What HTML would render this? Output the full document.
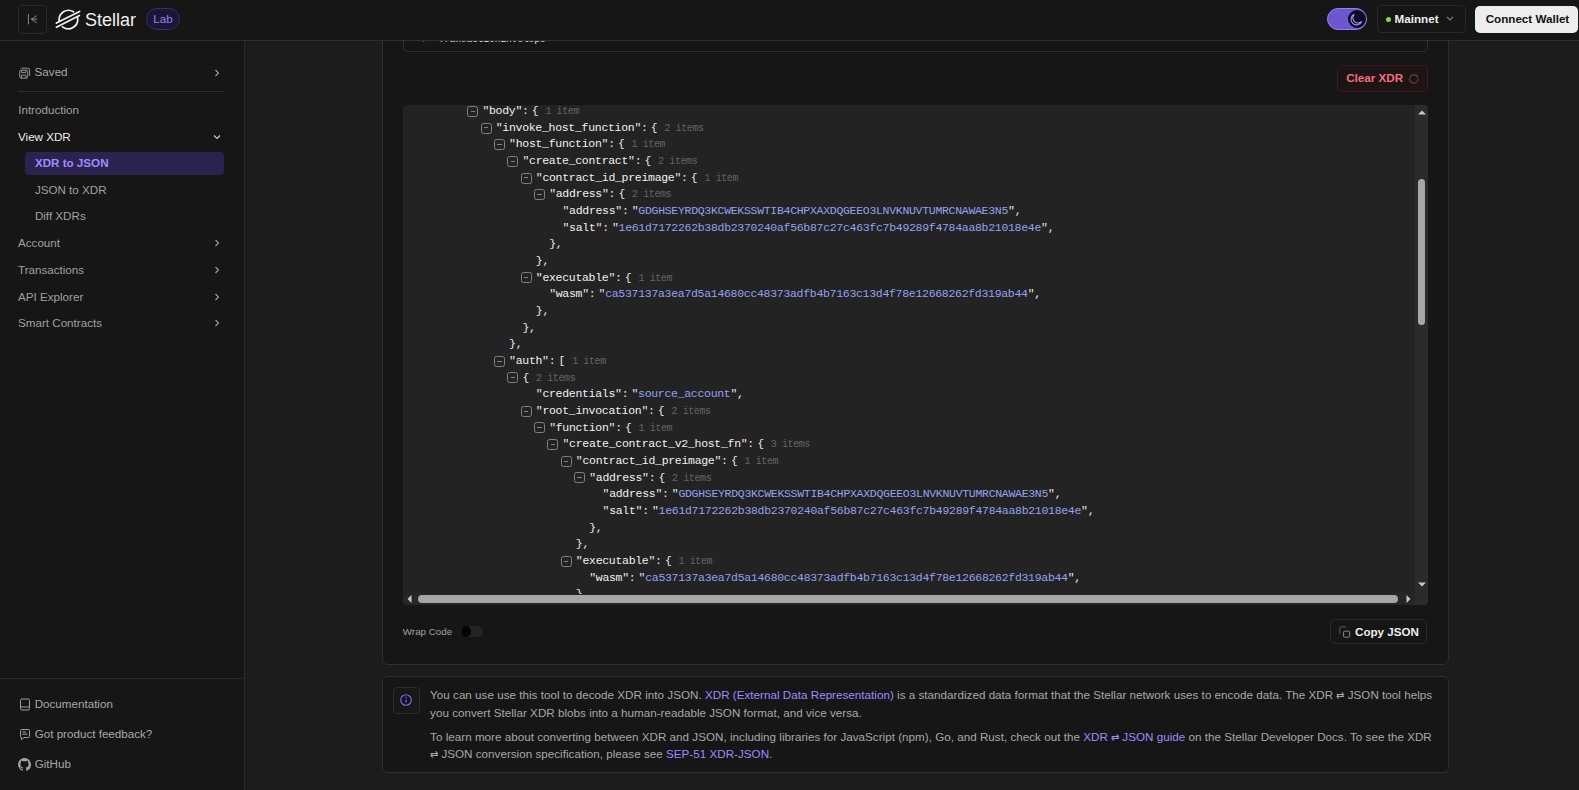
<!DOCTYPE html>
<html><head><meta charset="utf-8">
<style>
*{box-sizing:border-box;margin:0;padding:0}
html,body{width:1579px;height:790px;overflow:hidden;background:#1c1c1c;font-family:"Liberation Sans",sans-serif;color:#ededed}
.abs{position:absolute}
#hdr{position:absolute;left:0;top:0;width:1579px;height:41px;background:#161616;border-bottom:1px solid #2e2e2e;z-index:5}
#side{position:absolute;left:0;top:41px;width:245px;height:749px;background:#161616;border-right:1px solid #2a2a2a}
.nav{position:absolute;font-size:11.63px;line-height:14px;white-space:nowrap}
.chev{position:absolute}
.card{position:absolute;background:#161616;border:1px solid #2e2e2e;border-radius:6px}
#viewer{position:absolute;left:403px;top:104.6px;width:1025.3px;height:500.6px;background:#232323;border-radius:4px;overflow:hidden}
.ln{position:absolute;font-family:"Liberation Mono",monospace;font-size:11.5px;letter-spacing:-0.3px;line-height:16.66px;height:16.66px;white-space:pre;color:#e8e8e8}
.ln .ic{position:absolute;left:-15.2px;top:2.8px;width:11px;height:11px;border:1.3px solid #808080;border-radius:2.5px}
.ln .ic:after{content:"";position:absolute;left:2.4px;top:3.9px;width:4.4px;height:1px;background:#808080}
.ln .q{color:#ededed}
.ln .k{color:#f2f2f2}
.ln .c{color:#e8e8e8;margin-right:3.2px}
.ln .s{color:#e8e8e8}
.ln .v{color:#94a1f2}
.ln .b{color:#e8e8e8}
.ln .n{font-size:10px;letter-spacing:-0.4px;color:#646464;margin-left:7px}
.btn{position:absolute;border-radius:5px;font-weight:bold;font-size:11.63px;white-space:nowrap}
.info{font-size:11.63px;line-height:16.66px;color:#a8a8a8;white-space:nowrap;letter-spacing:0.025px}
.arr{font-size:9.5px}
.info a{color:#9e8cfc;text-decoration:none}
</style></head><body>

<div id="hdr">
  <div class="abs" style="left:18px;top:5px;width:28.5px;height:28.5px;border:1px solid #2a2a2a;border-radius:4px"></div>
  <svg class="abs" style="left:26px;top:13px" width="14" height="13" viewBox="0 0 14 13"><path d="M2.4 1v10.4M11.2 6.2H5.2M10.8 2.6L5.4 6.2 10.8 9.8" stroke="#8a8a8a" stroke-width="1" fill="none"/></svg>
  <svg class="abs" style="left:55px;top:8px" width="26" height="23" viewBox="0 0 26 23"><g fill="none" stroke="#f2f2f2" stroke-width="1.7" stroke-linecap="round"><path d="M4.2 12.8A9.4 9.4 0 0 1 18.5 3.8"/><path d="M22.4 9.2A9.4 9.4 0 0 1 7.5 18.8"/><path d="M1.4 15L24.6 3.4"/><path d="M1.4 19.2L24.4 7.6"/></g></svg>
  <div class="abs" style="left:85px;top:10px;font-size:18px;line-height:20px;color:#f0f0f0">Stellar</div>
  <div class="abs" style="left:146px;top:8px;width:34px;height:22px;border-radius:11px;background:#1b1637;border:1px solid #37305a;font-size:11.6px;line-height:20px;text-align:center;color:#9584e0">Lab</div>

  <div class="abs" style="left:1327px;top:8.2px;width:40px;height:21.6px;border-radius:11px;background:#6e56cf;border:1.3px solid #9484e6"></div>
  <div class="abs" style="left:1348.4px;top:10.3px;width:17.4px;height:17.4px;border-radius:9px;background:#0c0a26"></div>
  <svg class="abs" style="left:1349px;top:11px" width="16" height="16" viewBox="0 0 16 16"><path d="M5.3 3.2A5.6 5.6 0 1 0 12.8 10.4 5 5 0 0 1 5.3 3.2Z" fill="none" stroke="#a99cf0" stroke-width="1.1"/></svg>

  <div class="abs" style="left:1377.4px;top:4.9px;width:88.2px;height:28px;border:1px solid #282828;border-radius:4.5px"></div>
  <div class="abs" style="left:1386.4px;top:16.9px;width:5px;height:5px;border-radius:3px;background:#8fd14f"></div>
  <div class="abs" style="left:1394.6px;top:12px;font-size:11.63px;line-height:14px;font-weight:bold;color:#ededed">Mainnet</div>
  <svg class="abs" style="left:1445px;top:15.2px" width="10" height="7" viewBox="0 0 10 7"><path d="M2 2l3 3 3-3" stroke="#7a7a7a" stroke-width="1.1" fill="none"/></svg>

  <div class="btn" style="left:1475px;top:5.7px;width:102.8px;height:27.1px;background:#ededed;color:#111;line-height:25.4px;padding-left:10.7px">Connect Wallet</div>
</div>

<div id="side">

  <svg class="abs" style="left:18px;top:25px" width="14" height="14" viewBox="0 0 14 14"><g fill="none" stroke="#9a9a9a" stroke-width="0.95"><rect x="1.7" y="4.2" width="8" height="8" rx="1.4"/><path d="M3.6 4.2v2.4h4.2V4.2M3.5 12.2V9.2h4.4v3"/><path d="M3.4 2.2h6.2a2 2 0 0 1 2 2v5.6"/></g></svg>
  <div class="nav" style="left:34.6px;top:24.3px;color:#a8a8a8">Saved</div>
  <svg class="chev" style="left:212px;top:27px" width="10" height="10" viewBox="0 0 10 10"><path d="M3.5 2l3 3-3 3" stroke="#a0a0a0" stroke-width="1.1" fill="none"/></svg>
  <div class="abs" style="left:18px;top:50px;width:206.5px;height:1px;background:#2e2e2e"></div>
  <div class="nav" style="left:18.2px;top:62.4px;color:#a0a0a0">Introduction</div>
  <div class="nav" style="left:18px;top:88.6px;color:#ededed">View XDR</div>
  <svg class="chev" style="left:212px;top:90.6px" width="10" height="10" viewBox="0 0 10 10"><path d="M2 3.5l3 3 3-3" stroke="#d0d0d0" stroke-width="1.1" fill="none"/></svg>
  <div class="abs" style="left:25px;top:111px;width:198.8px;height:22.9px;border-radius:4px;background:#2c2250"></div>
  <div class="nav" style="left:34.9px;top:115.3px;color:#9e8cfc;font-weight:bold">XDR to JSON</div>
  <div class="nav" style="left:34.9px;top:141.7px;color:#a0a0a0">JSON to XDR</div>
  <div class="nav" style="left:34.9px;top:168.4px;color:#a0a0a0">Diff XDRs</div>
  <div class="nav" style="left:18px;top:195px;color:#a0a0a0">Account</div>
  <svg class="chev" style="left:212px;top:197px" width="10" height="10" viewBox="0 0 10 10"><path d="M3.5 2l3 3-3 3" stroke="#a0a0a0" stroke-width="1.1" fill="none"/></svg>
  <div class="nav" style="left:18px;top:222px;color:#a0a0a0">Transactions</div>
  <svg class="chev" style="left:212px;top:224px" width="10" height="10" viewBox="0 0 10 10"><path d="M3.5 2l3 3-3 3" stroke="#a0a0a0" stroke-width="1.1" fill="none"/></svg>
  <div class="nav" style="left:18px;top:248.5px;color:#a0a0a0">API Explorer</div>
  <svg class="chev" style="left:212px;top:250.5px" width="10" height="10" viewBox="0 0 10 10"><path d="M3.5 2l3 3-3 3" stroke="#a0a0a0" stroke-width="1.1" fill="none"/></svg>
  <div class="nav" style="left:18px;top:275px;color:#a0a0a0">Smart Contracts</div>
  <svg class="chev" style="left:212px;top:277px" width="10" height="10" viewBox="0 0 10 10"><path d="M3.5 2l3 3-3 3" stroke="#a0a0a0" stroke-width="1.1" fill="none"/></svg>

  <div class="abs" style="left:0;top:637px;width:243px;height:1px;background:#2a2a2a"></div>
  <svg class="abs" style="left:18.5px;top:657px" width="12" height="13" viewBox="0 0 12 13"><g fill="none" stroke="#a0a0a0" stroke-width="1"><rect x="1.5" y="1" width="9" height="11" rx="1.5"/><path d="M1.5 9h9"/></g></svg>
  <div class="nav" style="left:34.7px;top:656.3px;color:#a8a8a8">Documentation</div>
  <svg class="abs" style="left:18.5px;top:687px" width="12" height="13" viewBox="0 0 12 13"><g fill="none" stroke="#a0a0a0" stroke-width="1"><path d="M1.5 2.5a1 1 0 0 1 1-1h7a1 1 0 0 1 1 1v6a1 1 0 0 1-1 1H5l-2.5 2v-2a1 1 0 0 1-1-1z"/><path d="M3.3 4h3.8M3.3 6.2h5.2"/></g></svg>
  <div class="nav" style="left:34.7px;top:686.2px;color:#a8a8a8">Got product feedback?</div>
  <svg class="abs" style="left:18px;top:716.5px" width="13" height="13" viewBox="0 0 16 16"><path fill="#a0a0a0" d="M8 0C3.58 0 0 3.58 0 8c0 3.54 2.29 6.53 5.47 7.59.4.07.55-.17.55-.38 0-.19-.01-.82-.01-1.49-2.01.37-2.53-.49-2.69-.94-.09-.23-.48-.94-.82-1.13-.28-.15-.68-.52-.01-.53.63-.01 1.08.58 1.23.82.72 1.21 1.87.87 2.33.66.07-.52.28-.87.51-1.07-1.78-.2-3.64-.89-3.640-3.95 0-.87.31-1.59.82-2.15-.08-.2-.36-1.02.08-2.12 0 0 .67-.21 2.2.82.64-.18 1.32-.27 2-.27.68 0 1.36.09 2 .27 1.53-1.04 2.2-.82 2.2-.82.44 1.1.16 1.92.08 2.12.51.56.82 1.27.82 2.15 0 3.07-1.87 3.75-3.65 3.95.29.25.54.73.54 1.48 0 1.07-.01 1.93-.01 2.2 0 .21.15.46.55.38A8.013 8.013 0 0016 8c0-4.42-3.58-8-8-8z"/></svg>
  <div class="nav" style="left:34.7px;top:715.8px;color:#a8a8a8">GitHub</div>
</div>

<div id="main">

  <div class="card" style="left:382px;top:-20px;width:1067px;height:685.3px"></div>
  <div class="abs" style="left:403px;top:-10px;width:1024.6px;height:61.9px;border:1px solid #2e2e2e;border-radius:4px"></div>
  <div class="abs" style="left:438.5px;top:33px;font-family:'Liberation Mono',monospace;font-size:9.4px;line-height:14px;color:#e0e0e0">TransactionEnvelope</div>
  <svg class="abs" style="left:419px;top:34px" width="9" height="9" viewBox="0 0 9 9"><path d="M1.5 4l3 3 3-3" stroke="#9a9a9a" stroke-width="1.1" fill="none"/></svg>

  <div class="btn" style="left:1336.8px;top:64.8px;width:91.5px;height:27px;border:1px solid #3f1b21;background:#1d1416;color:#f56e7c;line-height:23.6px;padding-left:8.4px">Clear XDR</div>
  <svg class="abs" style="left:1407.5px;top:72.5px" width="12" height="12" viewBox="0 0 12 12"><g fill="none" stroke="#74393f" stroke-width="1.1"><path d="M10 6A4.2 4.2 0 1 1 8.6 2.9"/><path d="M6.6 2.4h2.6V5"/></g></svg>

  <div id="viewer">
<div class="ln" style="left:79.40px;top:-1.53px"><i class="ic"></i><span class="q">"</span><span class="k">body</span><span class="q">"</span><span class="c">:</span><span class="b">{</span><span class="n">1 item</span></div>
<div class="ln" style="left:92.75px;top:15.13px"><i class="ic"></i><span class="q">"</span><span class="k">invoke_host_function</span><span class="q">"</span><span class="c">:</span><span class="b">{</span><span class="n">2 items</span></div>
<div class="ln" style="left:106.10px;top:31.79px"><i class="ic"></i><span class="q">"</span><span class="k">host_function</span><span class="q">"</span><span class="c">:</span><span class="b">{</span><span class="n">1 item</span></div>
<div class="ln" style="left:119.45px;top:48.45px"><i class="ic"></i><span class="q">"</span><span class="k">create_contract</span><span class="q">"</span><span class="c">:</span><span class="b">{</span><span class="n">2 items</span></div>
<div class="ln" style="left:132.80px;top:65.11px"><i class="ic"></i><span class="q">"</span><span class="k">contract_id_preimage</span><span class="q">"</span><span class="c">:</span><span class="b">{</span><span class="n">1 item</span></div>
<div class="ln" style="left:146.15px;top:81.77px"><i class="ic"></i><span class="q">"</span><span class="k">address</span><span class="q">"</span><span class="c">:</span><span class="b">{</span><span class="n">2 items</span></div>
<div class="ln" style="left:159.50px;top:98.43px"><span class="q">"</span><span class="k">address</span><span class="q">"</span><span class="c">:</span><span class="s">"<span class="v">GDGHSEYRDQ3KCWEKSSWTIB4CHPXAXDQGEEO3LNVKNUVTUMRCNAWAE3N5</span>"</span><span class="q">,</span></div>
<div class="ln" style="left:159.50px;top:115.09px"><span class="q">"</span><span class="k">salt</span><span class="q">"</span><span class="c">:</span><span class="s">"<span class="v">1e61d7172262b38db2370240af56b87c27c463fc7b49289f4784aa8b21018e4e</span>"</span><span class="q">,</span></div>
<div class="ln" style="left:146.15px;top:131.75px"><span class="b">},</span></div>
<div class="ln" style="left:132.80px;top:148.41px"><span class="b">},</span></div>
<div class="ln" style="left:132.80px;top:165.07px"><i class="ic"></i><span class="q">"</span><span class="k">executable</span><span class="q">"</span><span class="c">:</span><span class="b">{</span><span class="n">1 item</span></div>
<div class="ln" style="left:146.15px;top:181.73px"><span class="q">"</span><span class="k">wasm</span><span class="q">"</span><span class="c">:</span><span class="s">"<span class="v">ca537137a3ea7d5a14680cc48373adfb4b7163c13d4f78e12668262fd319ab44</span>"</span><span class="q">,</span></div>
<div class="ln" style="left:132.80px;top:198.39px"><span class="b">},</span></div>
<div class="ln" style="left:119.45px;top:215.05px"><span class="b">},</span></div>
<div class="ln" style="left:106.10px;top:231.71px"><span class="b">},</span></div>
<div class="ln" style="left:106.10px;top:248.37px"><i class="ic"></i><span class="q">"</span><span class="k">auth</span><span class="q">"</span><span class="c">:</span><span class="b">[</span><span class="n">1 item</span></div>
<div class="ln" style="left:119.45px;top:265.03px"><i class="ic"></i><span class="b">{</span><span class="n">2 items</span></div>
<div class="ln" style="left:132.80px;top:281.69px"><span class="q">"</span><span class="k">credentials</span><span class="q">"</span><span class="c">:</span><span class="s">"<span class="v">source_account</span>"</span><span class="q">,</span></div>
<div class="ln" style="left:132.80px;top:298.35px"><i class="ic"></i><span class="q">"</span><span class="k">root_invocation</span><span class="q">"</span><span class="c">:</span><span class="b">{</span><span class="n">2 items</span></div>
<div class="ln" style="left:146.15px;top:315.01px"><i class="ic"></i><span class="q">"</span><span class="k">function</span><span class="q">"</span><span class="c">:</span><span class="b">{</span><span class="n">1 item</span></div>
<div class="ln" style="left:159.50px;top:331.67px"><i class="ic"></i><span class="q">"</span><span class="k">create_contract_v2_host_fn</span><span class="q">"</span><span class="c">:</span><span class="b">{</span><span class="n">3 items</span></div>
<div class="ln" style="left:172.85px;top:348.33px"><i class="ic"></i><span class="q">"</span><span class="k">contract_id_preimage</span><span class="q">"</span><span class="c">:</span><span class="b">{</span><span class="n">1 item</span></div>
<div class="ln" style="left:186.20px;top:364.99px"><i class="ic"></i><span class="q">"</span><span class="k">address</span><span class="q">"</span><span class="c">:</span><span class="b">{</span><span class="n">2 items</span></div>
<div class="ln" style="left:199.55px;top:381.65px"><span class="q">"</span><span class="k">address</span><span class="q">"</span><span class="c">:</span><span class="s">"<span class="v">GDGHSEYRDQ3KCWEKSSWTIB4CHPXAXDQGEEO3LNVKNUVTUMRCNAWAE3N5</span>"</span><span class="q">,</span></div>
<div class="ln" style="left:199.55px;top:398.31px"><span class="q">"</span><span class="k">salt</span><span class="q">"</span><span class="c">:</span><span class="s">"<span class="v">1e61d7172262b38db2370240af56b87c27c463fc7b49289f4784aa8b21018e4e</span>"</span><span class="q">,</span></div>
<div class="ln" style="left:186.20px;top:414.97px"><span class="b">},</span></div>
<div class="ln" style="left:172.85px;top:431.63px"><span class="b">},</span></div>
<div class="ln" style="left:172.85px;top:448.29px"><i class="ic"></i><span class="q">"</span><span class="k">executable</span><span class="q">"</span><span class="c">:</span><span class="b">{</span><span class="n">1 item</span></div>
<div class="ln" style="left:186.20px;top:464.95px"><span class="q">"</span><span class="k">wasm</span><span class="q">"</span><span class="c">:</span><span class="s">"<span class="v">ca537137a3ea7d5a14680cc48373adfb4b7163c13d4f78e12668262fd319ab44</span>"</span><span class="q">,</span></div>
<div class="ln" style="left:172.85px;top:481.61px"><span class="b">}</span></div>
    <div class="abs" style="left:1011.7px;top:0;width:13.6px;height:500.6px;background:#2b2b2b"></div>
    <svg class="abs" style="left:1014.5px;top:5.5px" width="8" height="5" viewBox="0 0 8 5"><path d="M0 4.5L4 0.5 8 4.5z" fill="#c8c8c8"/></svg>
    <div class="abs" style="left:1014.8px;top:74.5px;width:7.4px;height:145.7px;border-radius:3.7px;background:#a6a6a6"></div>
    <svg class="abs" style="left:1014.7px;top:477.8px" width="8" height="5" viewBox="0 0 8 5"><path d="M0 0.5L4 4.5 8 0.5z" fill="#c8c8c8"/></svg>
    <div class="abs" style="left:0;top:489px;width:1011.7px;height:11.6px;background:#262626"></div>
    <svg class="abs" style="left:3.5px;top:490.8px" width="5" height="8" viewBox="0 0 5 8"><path d="M4.5 0L0.5 4 4.5 8z" fill="#c8c8c8"/></svg>
    <div class="abs" style="left:15px;top:490.5px;width:980px;height:7.9px;border-radius:4px;background:#a6a6a6"></div>
    <svg class="abs" style="left:1002.8px;top:490.8px" width="5" height="8" viewBox="0 0 5 8"><path d="M0.5 0L4.5 4 0.5 8z" fill="#c8c8c8"/></svg>
  </div>

  <div class="abs" style="left:402.8px;top:626px;font-size:9.8px;line-height:12px;color:#a0a0a0">Wrap Code</div>
  <div class="abs" style="left:459.7px;top:625.8px;width:23.5px;height:11.5px;border-radius:6px;background:#242424"></div>
  <div class="abs" style="left:460.5px;top:626.3px;width:10.6px;height:10.6px;border-radius:6px;background:#050505"></div>

  <div class="btn" style="left:1330.2px;top:618.5px;width:97.2px;height:25.8px;border:1px solid #2a2a2a;color:#ededed;line-height:24px;padding-left:23.8px">Copy JSON</div>
  <svg class="abs" style="left:1339px;top:625.5px" width="12" height="12" viewBox="0 0 12 12"><path d="M0.8 8V1.6a0.7 0.7 0 0 1 0.7-0.7H7.2" fill="none" stroke="#5a5a5a" stroke-width="1"/><rect x="4.6" y="5.2" width="6" height="6" rx="0.8" fill="none" stroke="#858585" stroke-width="1"/></svg>

  <div class="card" style="left:382px;top:676px;width:1067px;height:96.6px"></div>
  <div class="abs" style="left:393px;top:687px;width:27px;height:26.5px;border:1px solid #2c2c2c;border-radius:4px;background:#181818"></div>
  <svg class="abs" style="left:399.3px;top:693.3px" width="14" height="14" viewBox="0 0 14 14"><circle cx="7" cy="7" r="6.6" fill="#15112b"/><g fill="none" stroke="#7e72c6" stroke-width="1.1"><circle cx="7" cy="7" r="5.3"/><path d="M7 6.4v3.2"/></g><circle cx="7" cy="4.6" r="0.75" fill="#7e72c6"/></svg>
  <div class="abs info" style="left:430.1px;top:686.9px">You can use use this tool to decode XDR into JSON. <a>XDR (External Data Representation)</a> is a standardized data format that the Stellar network uses to encode data. The XDR <span class="arr">&#8644;</span> JSON tool helps<br>you convert Stellar XDR blobs into a human-readable JSON format, and vice versa.</div>
  <div class="abs info" style="left:430.1px;top:728.7px">To learn more about converting between XDR and JSON, including libraries for JavaScript (npm), Go, and Rust, check out the <a>XDR <span class="arr">&#8644;</span> JSON guide</a> on the Stellar Developer Docs. To see the XDR<br><span class="arr">&#8644;</span> JSON conversion specification, please see <a>SEP-51 XDR-JSON</a>.</div>
</div>

</body></html>
